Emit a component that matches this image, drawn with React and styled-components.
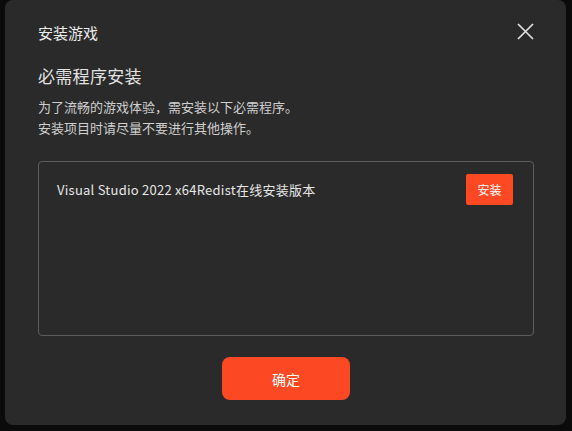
import React from "react";
import styled, { createGlobalStyle } from "styled-components";

const Global = createGlobalStyle`
  html, body { margin: 0; padding: 0; background: #0b0b0b; }
  body { font-family: "Noto Sans CJK SC", "Noto Sans", sans-serif; }
  * { box-sizing: border-box; }
`;

const Page = styled.div`
  width: 572px;
  height: 431px;
  padding: 0 0 0 5px;
`;

const Dialog = styled.div`
  width: 561px;
  height: 425px;
  background: #2a2a2a;
  border-radius: 8px;
  padding: 22px 32px 25px 33px;
  display: flex;
  flex-direction: column;
`;

const Header = styled.div`
  display: flex;
  align-items: center;
  justify-content: space-between;
  height: 22px;
`;

const Title = styled.div`
  font-size: 15px;
  line-height: 22px;
  color: #ececec;
`;

const Close = styled.button`
  width: 17px;
  height: 17px;
  margin: -3px 0 0 0;
  padding: 0;
  border: none;
  background: transparent;
  display: flex;
  cursor: pointer;
`;

const SectionTitle = styled.div`
  margin-top: 20px;
  font-size: 17px;
  line-height: 24px;
  letter-spacing: 0.3px;
  color: #e2e2e2;
`;

const Desc = styled.div`
  margin-top: 8px;
  font-size: 13px;
  line-height: 21px;
  color: #cfcfcf;
`;

const Box = styled.div`
  margin-top: 23px;
  height: 175px;
  flex-shrink: 0;
  border: 1px solid #5c5c5c;
  border-radius: 4px;
  padding: 12px 20px 0 18px;
`;

const Row = styled.div`
  display: flex;
  align-items: center;
  justify-content: space-between;
`;

const ItemName = styled.div`
  font-size: 13px;
  letter-spacing: 0.25px;
  color: #e6e6e6;
`;

const SmallButton = styled.button`
  width: 47px;
  height: 31px;
  border: none;
  border-radius: 2px;
  background: #fd4923;
  color: #fff;
  font-family: inherit;
  font-size: 12px;
  padding: 0;
`;

const Footer = styled.div`
  margin-top: 21px;
  display: flex;
  justify-content: center;
`;

const PrimaryButton = styled.button`
  width: 128px;
  height: 43px;
  border: none;
  border-radius: 8px;
  background: #fd4923;
  color: #fff;
  font-family: inherit;
  font-size: 14px;
  padding: 0;
`;

export default function App() {
  return (
    <>
      <Global />
      <Page>
        <Dialog>
          <Header>
            <Title>安装游戏</Title>
            <Close aria-label="关闭">
              <svg width="17" height="17" viewBox="0 0 17 17">
                <path d="M1 1 L16 16 M16 1 L1 16" stroke="#e0e0e0" strokeWidth="1.7" />
              </svg>
            </Close>
          </Header>
          <SectionTitle>必需程序安装</SectionTitle>
          <Desc>
            为了流畅的游戏体验，需安装以下必需程序。
            <br />
            安装项目时请尽量不要进行其他操作。
          </Desc>
          <Box>
            <Row>
              <ItemName>Visual Studio 2022 x64Redist在线安装版本</ItemName>
              <SmallButton>安装</SmallButton>
            </Row>
          </Box>
          <Footer>
            <PrimaryButton>确定</PrimaryButton>
          </Footer>
        </Dialog>
      </Page>
    </>
  );
}
